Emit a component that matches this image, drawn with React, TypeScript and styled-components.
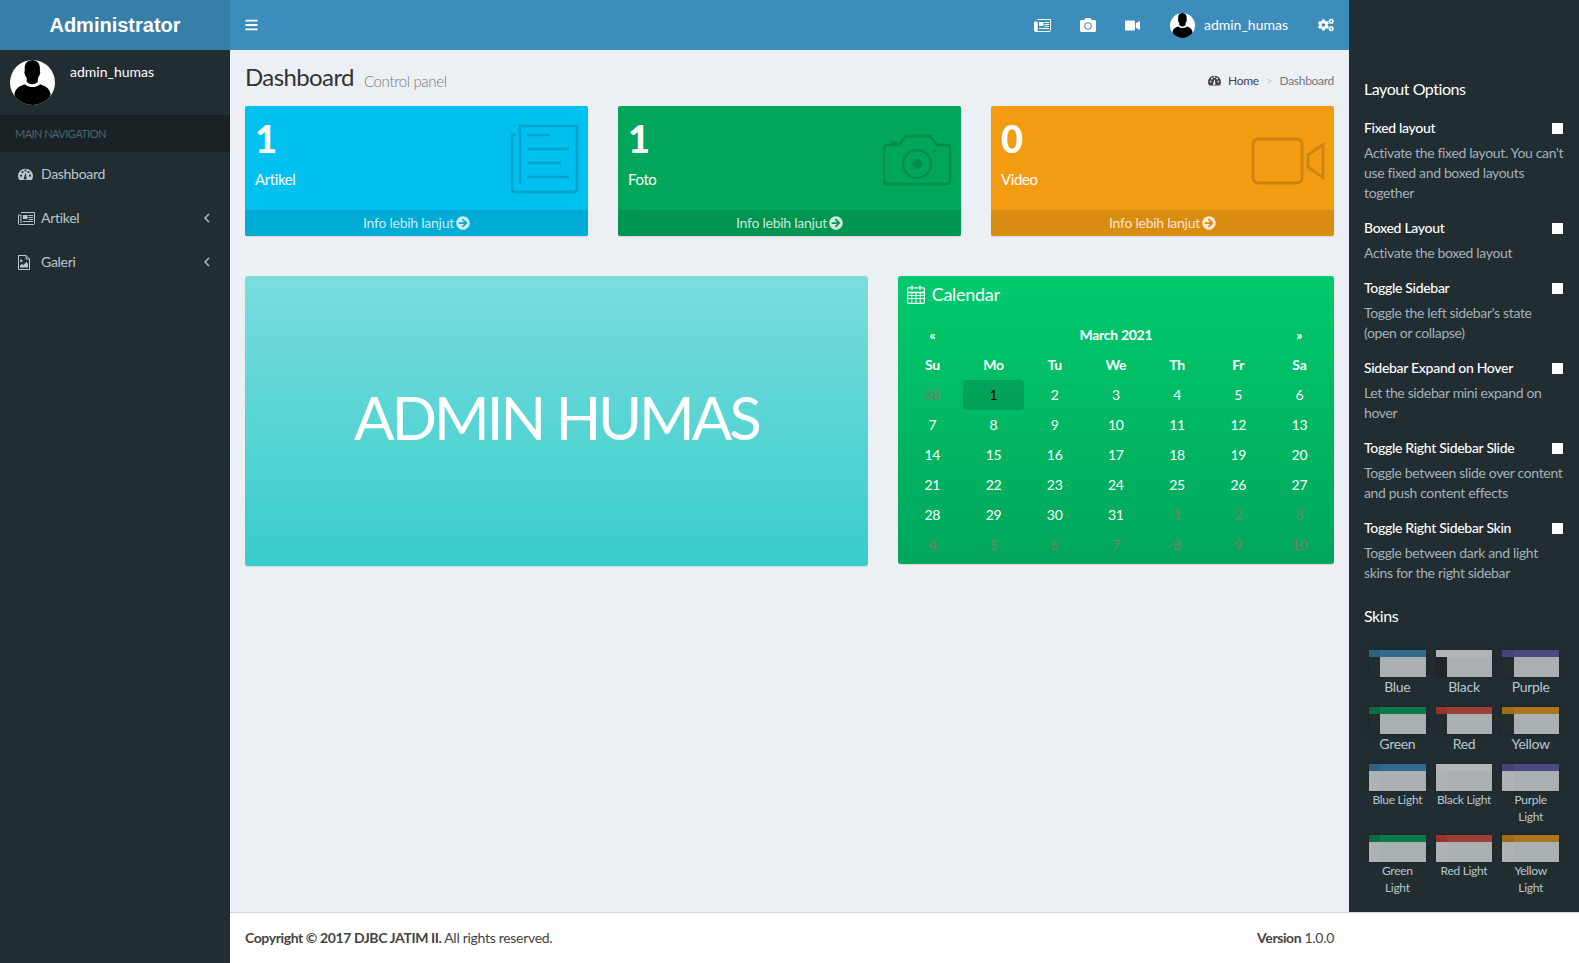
import React from "react";
import styled, { createGlobalStyle } from "styled-components";
import { FaArrowCircleRight, FaBars, FaCamera, FaCogs, FaVideo } from "react-icons/fa";

const Global = createGlobalStyle`
  * { box-sizing: border-box; }
  html, body { margin: 0; padding: 0; height: 100%; }
  body { font-family: Lato, "Noto Sans", sans-serif; font-size: 14px; line-height: 20px; letter-spacing: -.3px; color: #333; background: #ecf0f5; overflow: hidden; }
`;

const Shell = styled.div`
  display: grid;
  grid-template-columns: 230px 1119px 230px;
  grid-template-rows: 50px 862px 51px;
  height: 963px;
`;

/* left sidebar */
const Side = styled.aside`
  grid-column: 1; grid-row: 1 / 4;
  background: #222d32;
  display: flex; flex-direction: column;
`;
const Logo = styled.div`
  height: 50px; background: #367fa9; color: #fff;
  font: bold 20px/50px "Liberation Sans", Arial, sans-serif; letter-spacing: 0;
  text-align: center;
`;
const UserPanel = styled.div`
  display: flex; height: 65px; padding: 10px; gap: 15px;
  color: #fff;
`;
const UserName = styled.span`
  line-height: 20px; margin-top: 2px; letter-spacing: 0;
`;
const AvatarSvg = styled.svg<{ $size: number }>`
  width: ${p => p.$size}px; height: ${p => p.$size}px; flex: none; display: block;
`;
const NavHeading = styled.div`
  height: 37px; background: #1a2226; color: #4b646f; font-size: 11px; line-height: 37px; padding-left: 15px; letter-spacing: -.55px;
`;
const Menu = styled.nav`display: flex; flex-direction: column;`;
const MenuItem = styled.div`
  height: 44px; display: flex; align-items: center; padding: 0 20px 0 18px; color: #b8c7ce;
`;
const MenuIcon = styled.span`
  width: 23px; display: flex; align-items: center; flex: none;
`;
const MenuLabel = styled.span`flex: 1;`;
const ChevronSvg = styled.svg`width: 6px; height: 10px; flex: none; fill: none; stroke: #b8c7ce; stroke-width: 1.4;`;

/* top bar */
const TopBar = styled.header`
  grid-column: 2; grid-row: 1;
  background: #3c8dbc; color: #fff;
  display: flex; align-items: center; padding: 0 15px;
`;
const BarsIcon = styled(FaBars)`width: 13px; height: 14px;`;
const TopTools = styled.div`
  margin-left: auto; display: flex; align-items: center;
`;
const ToolIcon = styled.span<{ $gap: number }>`
  display: flex; margin-right: ${p => p.$gap}px;
`;
const TopUser = styled.div`
  display: flex; align-items: center; gap: 9px; margin-right: 30px; letter-spacing: 0;
`;

/* main */
const Main = styled.main`
  grid-column: 2; grid-row: 2; background: #ecf0f5; padding: 15px; 
`;
const PageHead = styled.div`
  display: flex; align-items: center; justify-content: space-between; height: 26px; margin-bottom: 15px;
`;
const Title = styled.h1`
  margin: 0; font-size: 24px; font-weight: 400; line-height: 26px; color: #333; display: flex; align-items: baseline; gap: 10px; letter-spacing: -.6px;
`;
const Subtitle = styled.small`font-size: 15px; color: #777; font-weight: 300; letter-spacing: -.35px; position: relative; top: 1px;`;
const Crumbs = styled.div`
  display: flex; align-items: center; font-size: 12px; color: #444; margin-top: 5px;
`;
const CrumbSep = styled.span`color: #ccc; margin: 0 7px;`;
const CrumbNow = styled.span`color: #777;`;
const CrumbIcon = styled.span`display: flex; margin-right: 7px;`;

const Stats = styled.section`
  display: grid; grid-template-columns: repeat(3, 343px); gap: 30px; margin-bottom: 40px;
`;
const StatBox = styled.article<{ $bg: string }>`
  position: relative; height: 130px; background: ${p => p.$bg}; color: #fff; border-radius: 2px; box-shadow: 0 1px 1px rgba(0,0,0,.1); overflow: hidden;
  display: flex; flex-direction: column;
`;
const StatBody = styled.div`height: 104px; padding: 11px 10px 0;`;
const StatNum = styled.h3`margin: 0 0 10px; font-size: 38px; line-height: 42px; font-weight: 900; letter-spacing: 0;`;
const StatText = styled.p`margin: 0; font-size: 15px; line-height: 20px; letter-spacing: -.4px;`;
const StatFoot = styled.div`
  height: 26px; background: rgba(0,0,0,.1); color: rgba(255,255,255,.8); letter-spacing: -.25px;
  display: flex; align-items: center; justify-content: center; gap: 2px;
`;
const StatArt = styled.svg<{ $w: number; $h: number; $top: number; $right: number }>`
  position: absolute; top: ${p => p.$top}px; right: ${p => p.$right}px;
  width: ${p => p.$w}px; height: ${p => p.$h}px; opacity: .15;
`;

const Widgets = styled.section`
  display: grid; grid-template-columns: 622.75px 436.25px; gap: 30px; align-items: start;
`;
const Banner = styled.div`
  height: 290px; border-radius: 3px; box-shadow: 0 1px 1px rgba(0,0,0,.1);
  background: linear-gradient(#7adddd, #39cccc); color: #fff;
  display: flex; align-items: center; justify-content: center;
  font-size: 60px; line-height: 1; font-weight: 400; padding-bottom: 8px; letter-spacing: -3.1px;
`;
const Calendar = styled.div`
  height: 288px; border-radius: 3px; box-shadow: 0 1px 1px rgba(0,0,0,.1);
  background: linear-gradient(#00ca6d, #00a65a); color: #fff;
`;
const CalHead = styled.div`
  height: 44px; padding: 0 9px 8px; display: flex; align-items: center; gap: 7px; font-size: 18px;
`;
const CalGrid = styled.div`
  display: grid; grid-template-columns: repeat(7, 1fr); grid-auto-rows: 30px; padding: 0 4px; align-items: center; text-align: center;
`;
const CalMonth = styled.div`grid-column: span 5; font-weight: 700; line-height: 30px;`;
const CalStrong = styled.div`font-weight: 700; line-height: 30px;`;
const CalDay = styled.div<{ $old?: boolean; $active?: boolean }>`
  line-height: 30px; border-radius: 4px;
  color: ${p => (p.$active ? "#000" : p.$old ? "#77806f" : "#fff")};
  background: ${p => (p.$active ? "rgba(0,0,0,.13)" : "transparent")};
`;

/* right panel */
const Panel = styled.aside`
  grid-column: 3; grid-row: 1 / 3; background: #222d32; color: #b8c7ce; padding: 70px 15px 0;
`;
const PanelHeading = styled.h4`
  margin: 10px 0 20px; font-size: 16px; line-height: 18px; font-weight: 400; color: #fff; letter-spacing: -.45px;
`;
const SkinsHeading = styled(PanelHeading)`margin-top: 24px;`;
const Option = styled.div`margin-bottom: 15px;`;
const OptionLabel = styled.div`
  display: flex; justify-content: space-between; align-items: center; color: #fff; height: 20px; margin-bottom: 5px; font-weight: 500;
`;
const Check = styled.span`width: 11px; height: 11px; background: #fff; display: block; margin-right: 1px;`;
const OptionLine = styled.p`margin: 0; color: #a3b1b8; line-height: 20px; letter-spacing: -.35px; white-space: nowrap;`;
const Skins = styled.ul`
  list-style: none; margin: 0; padding: 0; display: grid; grid-template-columns: repeat(3, 1fr); align-items: start;
`;
const SkinItem = styled.li`padding: 5px; text-align: center;`;
const Thumb = styled.div`
  display: grid; grid-template-columns: 20% 80%; grid-template-rows: 7px 20px; opacity: .65; box-shadow: 0 0 3px rgba(0,0,0,.4);
`;
const Swatch = styled.span<{ $bg: string }>`background: ${p => p.$bg}; display: block;`;
const SkinName = styled.div<{ $small?: boolean }>`
  font-size: ${p => (p.$small ? 12 : 14)}px; line-height: ${p => (p.$small ? "17.14px" : "20px")}; color: #b8c7ce;
`;

/* footer */
const Foot = styled.footer`
  grid-column: 2 / 4; grid-row: 3; background: #fff; border-top: 1px solid #d2d6de; color: #444;
  display: flex; justify-content: space-between; align-items: center; padding: 0 245px 0 15px;
`;
const FootStrong = styled.strong`letter-spacing: -.4px;`;

const Avatar = ({ size }: { size: number }) => (
  <AvatarSvg $size={size} viewBox="0 0 45 45">
    <defs><clipPath id={`a${size}`}><circle cx="22.5" cy="22.5" r="22.5" /></clipPath></defs>
    <circle cx="22.5" cy="22.5" r="22.5" fill="#fff" />
    <g clipPath={`url(#a${size})`} fill="#000">
      <path d="M22.3 0c-5 0-7.8 3.6-7.6 8.6.1 1.6.1 3-.4 3.8.4 2 1.2 4 2.4 5.4v3.6c.8 1.6 3.4 2.8 5.6 2.8s4.8-1.2 5.6-2.8v-3.6c1.2-1.4 2-3.4 2.4-5.4-.5-.8-.5-2.2-.4-3.8C30.1 3.6 27.3 0 22.3 0z" />
      <path d="M15 24.2c-5.6 1.6-10 4.4-10.6 10.4L6 46h33l1.6-11.4c-.6-6-5-8.8-10.6-10.4-1.6 1.8-4.6 2.9-7.5 2.9s-5.9-1.1-7.5-2.9z" />
    </g>
  </AvatarSvg>
);

const Chevron = () => (
  <ChevronSvg viewBox="0 0 6 10"><path d="M5 1 1 5l4 4" /></ChevronSvg>
);

const GaugeIcon = ({ w = 15 }: { w?: number }) => (
  <svg width={w} height={w * 0.8} viewBox="0 0 20 16" fill="currentColor">
    <path fillRule="evenodd" d="M10 1C4.5 1 0 5.3 0 10.6c0 1.8.5 3.400 1.400 4.900.1.3.4.5.7.5h15.800c.3 0 .6-.2.7-.5.9-1.500 1.400-3.100 1.400-4.900C20 5.300 15.500 1 10 1zM4 11.600a1.400 1.400 0 1 1 0-2.800 1.400 1.400 0 0 1 0 2.800zm2-4.800a1.400 1.400 0 1 1 0-2.800 1.400 1.400 0 0 1 0 2.800zm4-2a1.400 1.400 0 1 1 0-2.800 1.400 1.400 0 0 1 0 2.800zm1.500 8.600a1.900 1.900 0 1 1-3.100-1.300l1.200-4.700h1l.4 4.700c.3.4.5.8.5 1.300zm2.500-6.600a1.400 1.400 0 1 1 0-2.800 1.400 1.400 0 0 1 0 2.800zm2 4.800a1.400 1.400 0 1 1 0-2.800 1.400 1.400 0 0 1 0 2.800z" />
  </svg>
);

const NewsIcon = ({ solid }: { solid?: boolean }) => (
  <svg width="17" height="13" viewBox="0 0 17 13" fill="none" stroke="currentColor" strokeWidth="1">
    <path d="M3 .5h13.500v11a1 1 0 0 1-1 1H1.500a1 1 0 0 1-1-1V3h2.500v8" />
    {solid && <path d="M1 3.500h2v8.500H1.500L1 11z" fill="currentColor" />}
    <path d="M5 3h4.500v4H5z" fill="currentColor" stroke="none" />
    <path d="M10.500 3.500H15M10.500 5.500H15M10.500 7.500H15M5 9.500h10" />
  </svg>
);

const FileImageIcon = () => (
  <svg width="12" height="15" viewBox="0 0 12 15" fill="none" stroke="currentColor" strokeWidth="1">
    <path d="M.5.5H8L11.500 4v10.500H.500z" />
    <path d="M8 .5V4h3.500" />
    <circle cx="3.300" cy="5.700" r="1.200" fill="currentColor" stroke="none" />
    <path d="M2 12.500v-2l2-1.500 1.300 1 3-3 1.700 2v3.500z" fill="currentColor" stroke="none" />
  </svg>
);

const CalendarIcon = () => (
  <svg width="18" height="19" viewBox="0 0 18 19" fill="none" stroke="currentColor">
    <rect x=".6" y="2.800" width="16.800" height="15.600" rx="1.200" strokeWidth="1.200" />
    <path d="M1 7.500h16" strokeWidth="1.600" />
    <path d="M1 10.500h16M1 13.500h16M4.800 7v11M9 7v11M13.200 7v11" strokeWidth=".9" />
    <rect x="3.800" y=".5" width="2.400" height="4.600" rx="1" fill="currentColor" stroke="#00c868" strokeWidth=".6" />
    <rect x="11.800" y=".5" width="2.400" height="4.600" rx="1" fill="currentColor" stroke="#00c868" strokeWidth=".6" />
  </svg>
);

const PaperArt = () => (
  <StatArt $w={80} $h={80} $top={9} $right={8} viewBox="0 0 80 80" fill="none" stroke="#000" strokeWidth="2.500">
    <path d="M16 20h-4v54a3 3 0 0 0 3 3h59a3 3 0 0 0 3-3V11H20v58" />
    <path d="M27 20h23M27 34h42M27 48h34M27 62h42" />
  </StatArt>
);
const CameraArt = () => (
  <StatArt $w={70} $h={54} $top={28} $right={8} viewBox="0 0 70 54" fill="none" stroke="#000" strokeWidth="2.500">
    <path d="M4 11h12l6-8a2 2 0 0 1 2-1h22a2 2 0 0 1 2 1l6 8h10a3 3 0 0 1 3 3v33a3 3 0 0 1-3 3H4a3 3 0 0 1-3-3V14a3 3 0 0 1 3-3z" />
    <path d="M8 9h6" strokeWidth="3" />
    <circle cx="34" cy="30" r="14" />
    <circle cx="34" cy="30" r="5" fill="#000" stroke="none" />
    <rect x="50" y="15" width="3" height="3" fill="#000" stroke="none" />
  </StatArt>
);
const VideoArt = () => (
  <StatArt $w={76} $h={50} $top={31} $right={7} viewBox="0 0 76 50" fill="none" stroke="#000" strokeWidth="2.800">
    <rect x="2" y="2" width="49" height="44" rx="5" />
    <path d="M72 7.500v33L57 30V18z" />
  </StatArt>
);

const stats = [
  { n: "1", t: "Artikel", c: "#00c0ef", art: <PaperArt /> },
  { n: "1", t: "Foto", c: "#00a65a", art: <CameraArt /> },
  { n: "0", t: "Video", c: "#f39c12", art: <VideoArt /> },
];

const prev = [28];
const cur = Array.from({ length: 31 }, (_, i) => i + 1);
const next = [1, 2, 3, 4, 5, 6, 7, 8, 9, 10];

const options: { label: string; lines: string[] }[] = [
  { label: "Fixed layout", lines: ["Activate the fixed layout. You can't", "use fixed and boxed layouts", "together"] },
  { label: "Boxed Layout", lines: ["Activate the boxed layout"] },
  { label: "Toggle Sidebar", lines: ["Toggle the left sidebar's state", "(open or collapse)"] },
  { label: "Sidebar Expand on Hover", lines: ["Let the sidebar mini expand on", "hover"] },
  { label: "Toggle Right Sidebar Slide", lines: ["Toggle between slide over content", "and push content effects"] },
  { label: "Toggle Right Sidebar Skin", lines: ["Toggle between dark and light", "skins for the right sidebar"] },
];

const skinColors = [
  { n: "Blue", a: "#367fa9", b: "#3c8dbc", s: "#222d32" },
  { n: "Black", a: "#fefefe", b: "#fefefe", s: "#222" },
  { n: "Purple", a: "#555299", b: "#605ca8", s: "#222d32" },
  { n: "Green", a: "#008d4c", b: "#00a65a", s: "#222d32" },
  { n: "Red", a: "#d73925", b: "#dd4b39", s: "#222d32" },
  { n: "Yellow", a: "#e08e0b", b: "#f39c12", s: "#222d32" },
];

const Skin = ({ n, a, b, s, small }: { n: string; a: string; b: string; s: string; small?: boolean }) => (
  <SkinItem>
    <Thumb>
      <Swatch $bg={a} /><Swatch $bg={b} />
      <Swatch $bg={s} /><Swatch $bg="#f4f5f7" />
    </Thumb>
    <SkinName $small={small}>{n}</SkinName>
  </SkinItem>
);

export default function App() {
  return (
    <Shell>
      <Global />
      <Side>
        <Logo>Administrator</Logo>
        <UserPanel><Avatar size={45} /><UserName>admin_humas</UserName></UserPanel>
        <NavHeading>MAIN NAVIGATION</NavHeading>
        <Menu>
          <MenuItem><MenuIcon><GaugeIcon /></MenuIcon><MenuLabel>Dashboard</MenuLabel></MenuItem>
          <MenuItem><MenuIcon><NewsIcon /></MenuIcon><MenuLabel>Artikel</MenuLabel><Chevron /></MenuItem>
          <MenuItem><MenuIcon><FileImageIcon /></MenuIcon><MenuLabel>Galeri</MenuLabel><Chevron /></MenuItem>
        </Menu>
      </Side>

      <TopBar>
        <BarsIcon />
        <TopTools>
          <ToolIcon $gap={29}><NewsIcon solid /></ToolIcon>
          <ToolIcon $gap={29}><FaCamera size={16} /></ToolIcon>
          <ToolIcon $gap={30}><FaVideo size={15} /></ToolIcon>
          <TopUser><Avatar size={25} /><span>admin_humas</span></TopUser>
          <ToolIcon $gap={0}><FaCogs size={16} /></ToolIcon>
        </TopTools>
      </TopBar>

      <Main>
        <PageHead>
          <Title>Dashboard<Subtitle>Control panel</Subtitle></Title>
          <Crumbs>
            <CrumbIcon><GaugeIcon w={13} /></CrumbIcon>Home<CrumbSep>&gt;</CrumbSep><CrumbNow>Dashboard</CrumbNow>
          </Crumbs>
        </PageHead>

        <Stats>
          {stats.map(s => (
            <StatBox key={s.t} $bg={s.c}>
              <StatBody>
                <StatNum>{s.n}</StatNum>
                <StatText>{s.t}</StatText>
              </StatBody>
              {s.art}
              <StatFoot>Info lebih lanjut <FaArrowCircleRight size={14} /></StatFoot>
            </StatBox>
          ))}
        </Stats>

        <Widgets>
          <Banner>ADMIN HUMAS</Banner>
          <Calendar>
            <CalHead><CalendarIcon />Calendar</CalHead>
            <CalGrid>
              <CalStrong>«</CalStrong>
              <CalMonth>March 2021</CalMonth>
              <CalStrong>»</CalStrong>
              {["Su", "Mo", "Tu", "We", "Th", "Fr", "Sa"].map(d => <CalStrong key={d}>{d}</CalStrong>)}
              {prev.map(d => <CalDay key={`p${d}`} $old>{d}</CalDay>)}
              {cur.map(d => <CalDay key={d} $active={d === 1}>{d}</CalDay>)}
              {next.map(d => <CalDay key={`n${d}`} $old>{d}</CalDay>)}
            </CalGrid>
          </Calendar>
        </Widgets>
      </Main>

      <Panel>
        <PanelHeading>Layout Options</PanelHeading>
        {options.map(o => (
          <Option key={o.label}>
            <OptionLabel>{o.label}<Check /></OptionLabel>
            {o.lines.map(line => <OptionLine key={line}>{line}</OptionLine>)}
          </Option>
        ))}
        <SkinsHeading>Skins</SkinsHeading>
        <Skins>
          {skinColors.map(s => <Skin key={s.n} {...s} />)}
          {skinColors.map(s => <Skin key={s.n + "l"} {...s} n={`${s.n} Light`} s="#f9fafc" small />)}
        </Skins>
      </Panel>

      <Foot>
        <span><FootStrong>Copyright © 2017 DJBC JATIM II.</FootStrong> All rights reserved.</span>
        <span><FootStrong>Version</FootStrong> 1.0.0</span>
      </Foot>
    </Shell>
  );
}
